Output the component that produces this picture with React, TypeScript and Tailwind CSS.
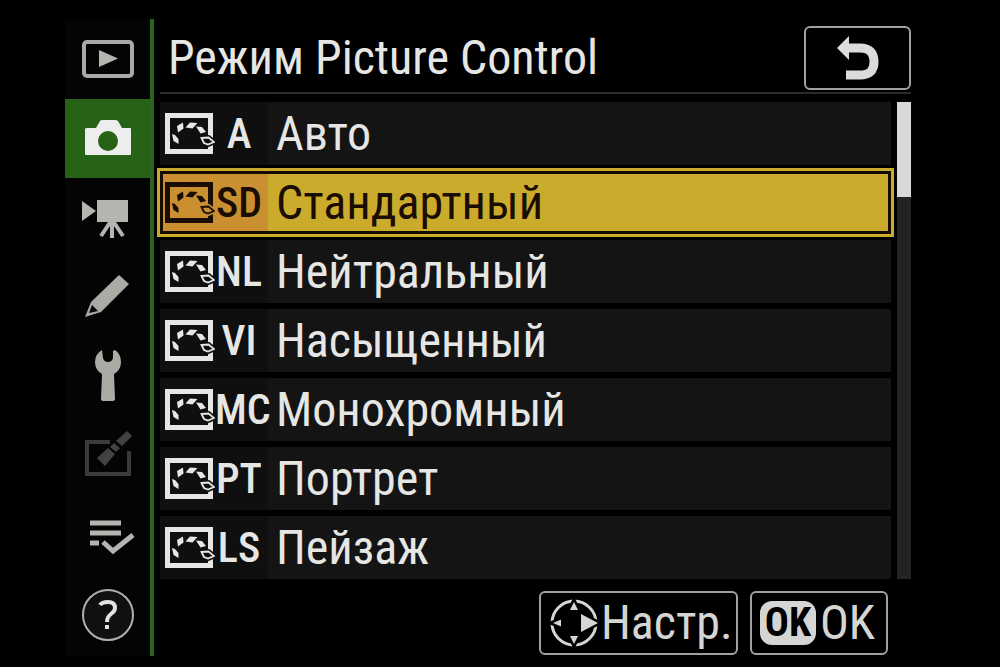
import { ReactNode } from 'react';
import clsx from 'clsx';

type Tab = { id: string; label: string; icon: ReactNode };
type Mode = { code: string; label: string };

const modes: Mode[] = [
  { code: 'A', label: 'Авто' },
  { code: 'SD', label: 'Стандартный' },
  { code: 'NL', label: 'Нейтральный' },
  { code: 'VI', label: 'Насыщенный' },
  { code: 'MC', label: 'Монохромный' },
  { code: 'PT', label: 'Портрет' },
  { code: 'LS', label: 'Пейзаж' },
];

const selectedCode = 'SD';

const tabs: Tab[] = [
  {
    id: 'playback',
    label: 'Просмотр',
    icon: (
      <>
        <rect x="4" y="11" width="48" height="34" rx="3" fill="none" stroke="#a9aaa6" strokeWidth="4" />
        <path d="M19 19 L38 27.5 L19 36 Z" fill="#b4b5b0" />
      </>
    ),
  },
  {
    id: 'photo',
    label: 'Фотосъемка',
    icon: (
      <path
        fill="#ededed"
        fillRule="evenodd"
        d="M7 18 H16 L20 11 Q21 10 22 10 H35 Q37 10 38 11 L42 18 H50 Q51 18 51 19 V44 Q51 45 50 45 H6 Q5 45 5 44 V19 Q5 18 7 18 Z M28 21 A10 10 0 1 0 28 41 A10 10 0 1 0 28 21 Z"
      />
    ),
  },
  {
    id: 'video',
    label: 'Видео',
    icon: (
      <>
        <path d="M2 11 L16 21 L2 31 Z M17 10 H48 V32 H17 Z" fill="#b4b5b0" />
        <path d="M31 31 L21 46 M32 31 V48 M33 31 L43 46" stroke="#b4b5b0" strokeWidth="4" fill="none" />
      </>
    ),
  },
  {
    id: 'custom',
    label: 'Настройки',
    icon: (
      <>
        <path d="M39 5 L49 14 L21 42 L5 47 L11 32 Z" fill="#a9aba4" />
        <path d="M12 35 L18 41 L9 43 Z" fill="#050505" />
      </>
    ),
  },
  {
    id: 'setup',
    label: 'Режим настройки',
    icon: (
      <path
        d="M22 1 Q15 5 15 13 Q15 21 22 25 L21 50 Q21 52 23 52 H33 Q35 52 35 50 L34 25 Q41 21 41 13 Q41 5 35 1 L33 2 V9 Q32 13 28 13 Q24 13 23 9 Z"
        fill="#a9aba4"
      />
    ),
  },
  {
    id: 'retouch',
    label: 'Обработка',
    icon: (
      <>
        <path d="M30 13 H7 V45 H49 V22" fill="none" stroke="#3b3b3b" strokeWidth="4" />
        <path d="M47 2 L52 7 L42 17 L36 12 Z M34 14 L40 19 L36 23 L30 18 Z M28 19 L35 25 L25 37 L17 29 Z" fill="#424242" />
      </>
    ),
  },
  {
    id: 'my-menu',
    label: 'Мое меню',
    icon: (
      <>
        <path d="M10 14 H41 M10 24 H41 M10 34 H19" fill="none" stroke="#b4b5b0" strokeWidth="5" />
        <path d="M23 33 L33 42 L53 26" fill="none" stroke="#b4b5b0" strokeWidth="5" />
      </>
    ),
  },
  {
    id: 'help',
    label: 'Справка',
    icon: (
      <>
        <circle cx="28" cy="27" r="25" fill="#101010" stroke="#b0b0ae" strokeWidth="2" />
        <path d="M20 17 Q22 14 28 14 Q35 14 35 20 Q35 23 31 26 Q27 29 27 34" fill="none" stroke="#e2e2e0" strokeWidth="4" />
        <rect x="25" y="37" width="4" height="4" fill="#e2e2e0" />
      </>
    ),
  },
];

function PictureControlIcon() {
  return (
    <svg viewBox="0 0 50 42" className="h-[42px] w-[50px] shrink-0" aria-hidden="true">
      <rect x="2.5" y="2.5" width="43" height="36" fill="none" stroke="currentColor" strokeWidth="5" />
      <path
        fill="currentColor"
        d="M7 21 L10 22 L13.5 26 L13.5 31 L8.5 28 Z M12 13 L18 9.5 L18.5 15.5 L13 19.5 Z M20.5 14.5 L25 9.5 L32.5 10 L27.5 15.5 Z M31 13.5 L37 14 L41 19 L35.5 20.5 Z"
      />
      <path
        className="fill-(--cell)"
        stroke="var(--cell)"
        strokeWidth="5"
        d="M36.5 25 L43.5 24.5 L49 29 L43 31.5 L39 30 Z"
      />
      <path
        className="fill-(--cell)"
        stroke="currentColor"
        strokeWidth="1.8"
        d="M36.5 25 L43.5 24.5 L49 29 L43 31.5 L39 30 Z"
      />
    </svg>
  );
}

function MultiSelectorIcon() {
  const arrows = 'M25 4 L29 12 H21 Z M25 46 L21 38 H29 Z M4 25 L12 21.5 V28.5 Z M49 25 L32 16 V34 Z';
  return (
    <svg viewBox="0 0 50 50" className="mr-0.5 size-[50px] shrink-0" fill="none" aria-hidden="true">
      <circle cx="25" cy="25" r="22" stroke="#d5d6d3" strokeWidth="3" />
      {/* black outline keeps the arrows apart from the ring */}
      <path d={arrows} stroke="#000" strokeWidth="5" />
      <path d={arrows} fill="#d5d6d3" />
    </svg>
  );
}

function ModeRow({ mode, selected }: { mode: Mode; selected: boolean }) {
  return (
    <li>
      <button
        type="button"
        aria-pressed={selected}
        className={clsx(
          'flex h-[63px] w-full items-stretch text-left',
          selected
            ? 'border-3 border-[#150b02] bg-[#cbab2c] text-[#1a0d04] outline-3 outline-[#cbab2c] [--cell:#ca8f30]'
            : 'bg-[#141414] text-[#e6e7e5] [--cell:#0f0f0f]'
        )}
      >
        <span className={clsx('flex shrink-0 items-center bg-(--cell)', selected ? 'w-[105px] pl-0.5' : 'w-[108px] pl-[5px]')}>
          <PictureControlIcon />
          <span className="w-12 text-center text-[42px] leading-none font-medium">{mode.code}</span>
        </span>
        <span className="flex items-center pl-2 text-[48px] leading-none">{mode.label}</span>
      </button>
    </li>
  );
}

export default function App() {
  return (
    <div className="flex min-h-screen bg-black pt-[19px] pr-[89px] pb-[11px] pl-[65px] font-['Roboto_Condensed','Noto_Sans',sans-serif] text-[#e6e7e5]">
      <nav className="flex w-[89px] shrink-0 flex-col border-r-4 border-[#2d6320]">
        {tabs.map((tab) => (
          <button
            key={tab.id}
            type="button"
            aria-label={tab.label}
            className={clsx('flex flex-1 items-center justify-center', tab.id === 'photo' ? 'bg-[#276316]' : 'bg-[#040404]')}
          >
            <svg viewBox="0 0 56 56" className="size-14">{tab.icon}</svg>
          </button>
        ))}
      </nav>

      <main className="flex min-w-0 flex-1 flex-col pl-1.5">
        <header className="flex h-[75px] items-center justify-between border-b-2 border-[#2a2a2a] pt-1 pl-2">
          <h1 className="text-[48px] leading-none">Режим Picture Control</h1>
          <button
            type="button"
            aria-label="Назад"
            className="flex h-16 w-[107px] items-center justify-center rounded-md border-2 border-[#a0a0a0]"
          >
            <svg viewBox="0 0 44 46" className="h-[46px] w-11" fill="none">
              <path d="M1 13 L13 1 V25 Z" fill="#dcdcdc" />
              <path d="M11 13 H24 Q38 13 38 27 Q38 40 24 40 H10" stroke="#dcdcdc" strokeWidth="9" />
            </svg>
          </button>
        </header>

        <div className="mt-2 flex gap-1.5">
          <ul className="flex flex-1 flex-col gap-1.5">
            {modes.map((mode) => (
              <ModeRow key={mode.code} mode={mode} selected={mode.code === selectedCode} />
            ))}
          </ul>
          <div className="w-3.5 bg-[#232323]">
            <div className="h-1/5 bg-[#d9d9da]" />
          </div>
        </div>

        <footer className="mt-3 flex justify-end gap-3 pr-[23px]">
          <button
            type="button"
            className="flex h-16 w-[199px] items-center rounded-md border-2 border-[#a0a0a0] pl-2 text-[48px] leading-none text-[#d5d6d3]"
          >
            <MultiSelectorIcon />
            Настр.
          </button>
          <button
            type="button"
            className="flex h-16 w-[138px] items-center gap-1 rounded-md border-2 border-[#a0a0a0] pl-2 text-[48px] leading-none text-[#d5d6d3]"
          >
            <span className="flex h-11 w-14 items-center justify-center rounded-xl bg-[#d5d6d3] text-[40px] font-bold text-black">OK</span>
            OK
          </button>
        </footer>
      </main>
    </div>
  );
}
